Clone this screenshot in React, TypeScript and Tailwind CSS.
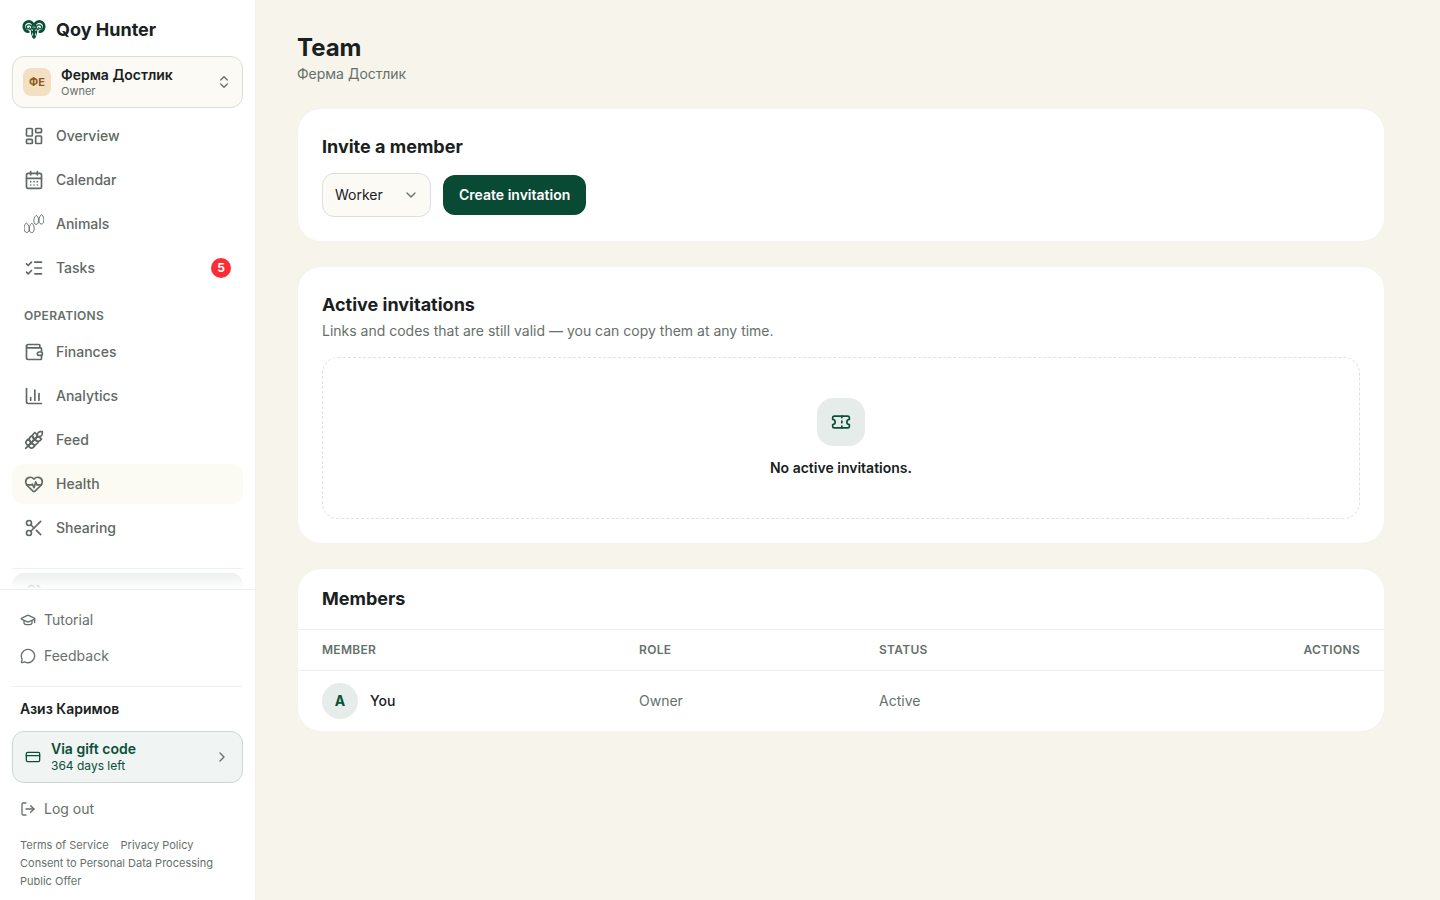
import React, { useState } from "react";
import {
  CalendarDays,
  ChartColumn,
  ChevronDown,
  ChevronRight,
  ChevronsUpDown,
  CreditCard,
  GraduationCap,
  HeartPulse,
  LayoutDashboard,
  ListChecks,
  LogOut,
  MessageCircle,
  Scissors,
  Ticket,
  Users,
  Wallet,
  Wheat,
} from "lucide-react";

type IconType = React.ComponentType<{ className?: string }>;

type NavItem = {
  label: string;
  icon: IconType;
  badge?: number;
  highlighted?: boolean;
};

function HoofIcon({ className }: { className?: string }) {
  return (
    <svg viewBox="0 0 20 20" fill="none" stroke="currentColor" strokeWidth="0.9" className={className}>
      <path d="M2.300 8.900C.2 10.500-.4 13.900.5 16.800c.7 2.100 3.700 2.200 4.400.3.900-2.500.1-6.600-2.600-8.200Z" />
      <path d="M7.900 9.200c-2.400 1.500-3.200 5.200-2.300 7.900.7 2 3.400 2 4.100.1.900-2.500.7-6.300-1.800-8Z" />
      <path d="M12.300 1.300c-2.200 1.500-3 4.900-2.200 7.600.7 2 3.300 2 4 .1.900-2.500.600-6.100-1.800-7.700Z" />
      <path d="M17.500.6c-2.200 1.600-3 5.200-2.200 7.900.7 2 3.300 2.100 4 .2.900-2.500.6-6.500-1.800-8.100Z" />
    </svg>
  );
}

function RamLogo({ className }: { className?: string }) {
  const half = (
    <>
      <path
        d="M10.700 5.500C9.300 3.600 6.700 2.900 4.500 4.100 2 5.400 1.300 8.300 2.300 10.600c.7 1.700 2.100 2.800 3.900 3.100"
        fill="none"
        stroke="currentColor"
        strokeWidth="2.800"
        strokeLinecap="round"
      />
      <path
        d="M9.500 8.600C8.800 6.900 6.700 6.300 5.300 7.300c-1.200.9-1.200 2.600-.1 3.300.9.500 2.100.1 2.200-.9"
        fill="none"
        stroke="currentColor"
        strokeWidth="1.300"
        strokeLinecap="round"
      />
      <path
        d="M12 6.200 10 4.800 9.200 9.400l-2.300 2.400 1.900.5.300 3.400 1.300 4.100 1.600 1.200V6.200Z"
        fill="currentColor"
      />
      <path d="m9.300 10.700 1.700 1.400-.2.900-1.300-.7Z" fill="white" />
      <path d="m11.100 7.600.4 3-.9-1.100ZM10.400 14.200l.8 3-.6.9-.6-2Z" fill="white" />
    </>
  );
  return (
    <svg viewBox="0 0 24 24" className={className} aria-hidden="true">
      <g>{half}</g>
      <g transform="translate(24 0) scale(-1 1)">{half}</g>
    </svg>
  );
}

const mainNav: NavItem[] = [
  { label: "Overview", icon: LayoutDashboard },
  { label: "Calendar", icon: CalendarDays },
  { label: "Animals", icon: HoofIcon },
  { label: "Tasks", icon: ListChecks, badge: 5 },
];

const operationsNav: NavItem[] = [
  { label: "Finances", icon: Wallet },
  { label: "Analytics", icon: ChartColumn },
  { label: "Feed", icon: Wheat },
  { label: "Health", icon: HeartPulse, highlighted: true },
  { label: "Shearing", icon: Scissors },
];

const legalLinks = ["Terms of Service", "Privacy Policy", "Consent to Personal Data Processing", "Public Offer"];

const members = [{ initial: "A", name: "You", role: "Owner", status: "Active" }];

function NavList({ items }: { items: NavItem[] }) {
  return (
    <ul className="flex flex-col gap-1">
      {items.map(({ label, icon: Icon, badge, highlighted }) => (
        <li key={label}>
          <a
            href="#"
            className={`flex h-10 items-center gap-3 rounded-xl px-3 text-sm font-medium text-[#5f6863] ${
              highlighted ? "bg-[#fbfaf3]" : ""
            }`}
          >
            <Icon className="size-5 shrink-0" />
            <span className="flex-1">{label}</span>
            {badge && (
              <span className="flex size-5 items-center justify-center rounded-full bg-[#fb2c36] text-xs font-bold text-white">
                {badge}
              </span>
            )}
          </a>
        </li>
      ))}
    </ul>
  );
}

function Sidebar() {
  return (
    <aside className="flex h-screen w-64 shrink-0 flex-col border-r border-[#f1f2ee] bg-white">
      <div className="flex h-14 items-center gap-2.5 px-[22px] pt-1">
        <RamLogo className="size-6 text-[#0a4f37]" />
        <span className="text-lg font-bold text-[#18211d]">Qoy Hunter</span>
      </div>

      <div className="px-3 pb-2">
        <button className="flex h-[52px] w-full items-center gap-2.5 rounded-xl border border-[#dadfda] bg-[#fbfaf5] px-2.5 text-left">
          <span className="flex size-7 items-center justify-center rounded-lg bg-[#f3e0c2] text-[11px] font-bold text-[#8a5a1c]">
            ФЕ
          </span>
          <span className="flex flex-1 flex-col">
            <span className="text-sm leading-[18px] font-semibold text-[#18211d]">Ферма Достлик</span>
            <span className="text-[11px] leading-[14px] text-[#66706a]">Owner</span>
          </span>
          <ChevronsUpDown className="size-4 text-[#66706a]" />
        </button>
      </div>

      <nav className="relative min-h-0 flex-1 overflow-hidden px-3">
        <NavList items={mainNav} />
        <h2 className="flex h-11 items-center px-3 pt-3 text-xs font-semibold tracking-wide text-[#66706a] uppercase">
          Operations
        </h2>
        <NavList items={operationsNav} />
        <div className="mt-5 border-t border-[#edf0ee] pt-1">
          <a
            href="#"
            aria-label="Team"
            className="flex h-10 items-center rounded-xl bg-[#e6ebe9] px-3 text-[#0a4a33]"
          >
            <Users className="size-5" />
          </a>
        </div>
        <div className="pointer-events-none absolute inset-x-0 bottom-0 h-5 bg-linear-to-t from-white to-transparent" />
      </nav>

      <div className="border-t border-[#edf0ee] px-3 pt-3 pb-2.5">
        <a href="#" className="flex h-9 items-center gap-2 px-2 text-sm text-[#66706a]">
          <GraduationCap className="size-4" />
          Tutorial
        </a>
        <a href="#" className="flex h-9 items-center gap-2 px-2 text-sm text-[#66706a]">
          <MessageCircle className="size-4" />
          Feedback
        </a>

        <div className="mt-3 border-t border-[#edf0ee] pt-3">
          <p className="px-2 text-sm font-semibold text-[#18211d]">Азиз Каримов</p>
          <a
            href="#"
            className="mt-3 flex h-[52px] items-center gap-2.5 rounded-xl border border-[#ccd8d3] bg-[#f0f4f3] px-3 text-[#0a4f37]"
          >
            <CreditCard className="size-4" />
            <span className="flex flex-1 flex-col">
              <span className="text-sm leading-[18px] font-semibold">Via gift code</span>
              <span className="text-xs leading-4">364 days left</span>
            </span>
            <ChevronRight className="size-4 text-[#66706a]" />
          </a>
          <button className="mt-2 flex h-9 w-full items-center gap-2 px-2 text-sm text-[#66706a]">
            <LogOut className="size-4" />
            Log out
          </button>
        </div>

        <div className="mt-[9px] flex flex-wrap gap-x-3 px-2 text-[11px] leading-[18px] text-[#66706a]">
          {legalLinks.map((link) => (
            <a key={link} href="#">
              {link}
            </a>
          ))}
        </div>
      </div>
    </aside>
  );
}

function InviteCard() {
  const [role, setRole] = useState("worker");

  return (
    <section className="rounded-3xl border border-[#f4f3ed] bg-white p-6">
      <h2 className="text-lg leading-7 font-bold">Invite a member</h2>
      <div className="mt-3 flex items-center gap-3">
        <div className="relative">
          <select
            aria-label="Role"
            value={role}
            onChange={(e) => setRole(e.target.value)}
            className="h-11 w-[109px] appearance-none rounded-xl border border-[#dcdfdb] bg-[#fbfaf5] pr-8 pl-3 text-sm"
          >
            <option value="worker">Worker</option>
            <option value="owner">Owner</option>
          </select>
          <ChevronDown className="pointer-events-none absolute top-3.5 right-3 size-4 text-[#66706a]" />
        </div>
        <button className="h-10 rounded-xl bg-[#084a33] px-4 text-sm font-semibold text-white">
          Create invitation
        </button>
      </div>
    </section>
  );
}

function InvitationsCard() {
  return (
    <section className="rounded-3xl border border-[#f4f3ed] bg-white p-6">
      <h2 className="text-lg leading-7 font-bold">Active invitations</h2>
      <p className="mt-0.5 text-sm text-[#66706a]">
        Links and codes that are still valid — you can copy them at any time.
      </p>
      <div className="mt-4 flex flex-col items-center rounded-2xl border border-dashed border-[#dfe3e0] py-10">
        <div className="flex size-12 items-center justify-center rounded-2xl bg-[#e6ecea] text-[#0a4f37]">
          <Ticket className="size-5" />
        </div>
        <p className="mt-3 text-sm font-semibold">No active invitations.</p>
      </div>
    </section>
  );
}

function MembersCard() {
  return (
    <section className="overflow-hidden rounded-3xl border border-[#f4f3ed] bg-white">
      <h2 className="px-6 py-4 text-lg leading-7 font-bold">Members</h2>
      <table className="w-full table-fixed text-left text-sm">
        <thead className="border-y border-[#edf0ee] text-xs tracking-wide text-[#66706a] uppercase">
          <tr className="h-[41px]">
            <th className="w-[317px] px-6 font-semibold">Member</th>
            <th className="w-60 px-6 font-semibold">Role</th>
            <th className="px-6 font-semibold">Status</th>
            <th className="px-6 text-right font-semibold">Actions</th>
          </tr>
        </thead>
        <tbody>
          {members.map((member) => (
            <tr key={member.name}>
              <td className="px-6 py-3">
                <div className="flex items-center gap-3">
                  <span className="flex size-9 items-center justify-center rounded-full bg-[#e6ecea] font-bold text-[#0a4f37]">
                    {member.initial}
                  </span>
                  <span className="font-medium">{member.name}</span>
                </div>
              </td>
              <td className="px-6 text-[#66706a]">{member.role}</td>
              <td className="px-6 text-[#66706a]">{member.status}</td>
              <td className="px-6" />
            </tr>
          ))}
        </tbody>
      </table>
    </section>
  );
}

export default function App() {
  return (
    <div className="flex h-screen bg-[#f7f4ec] font-[Inter,sans-serif] text-[#18211d]">
      <Sidebar />
      <main className="min-w-0 flex-1 overflow-hidden py-8 pr-[55px] pl-[41px]">
        <h1 className="text-2xl font-bold">Team</h1>
        <p className="text-sm text-[#66706a]">Ферма Достлик</p>
        <div className="mt-6 flex flex-col gap-6">
          <InviteCard />
          <InvitationsCard />
          <MembersCard />
        </div>
      </main>
    </div>
  );
}
